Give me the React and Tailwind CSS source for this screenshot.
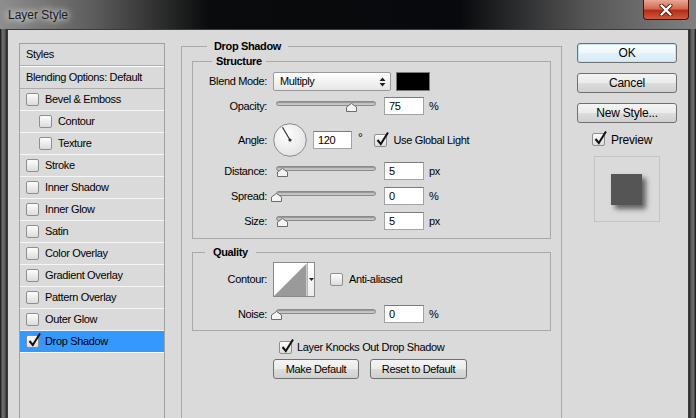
import React from "react";

const styleRows = [
  { label: "Bevel & Emboss", indent: false, on: false },
  { label: "Contour", indent: true, on: false },
  { label: "Texture", indent: true, on: false },
  { label: "Stroke", indent: false, on: false },
  { label: "Inner Shadow", indent: false, on: false },
  { label: "Inner Glow", indent: false, on: false },
  { label: "Satin", indent: false, on: false },
  { label: "Color Overlay", indent: false, on: false },
  { label: "Gradient Overlay", indent: false, on: false },
  { label: "Pattern Overlay", indent: false, on: false },
  { label: "Outer Glow", indent: false, on: false },
  { label: "Drop Shadow", indent: false, on: true, selected: true },
];

const Check = ({ on }) => (
  <span className="relative flex h-[13px] w-[13px] shrink-0 rounded-[2px] border border-[#8e8e8e] bg-[linear-gradient(#fdfdfd,#dcdcdc)]">
    {on && (
      <svg className="absolute left-[1px] top-[-4px]" width="14" height="15" viewBox="0 0 14 15">
        <path d="M1.5 9 L4.8 13 L12 1.5" fill="none" stroke="#111" strokeWidth="2" />
      </svg>
    )}
  </span>
);

const Field = ({ v, w = "w-[40px]" }) => (
  <div className={`${w} flex h-[18px] shrink-0 items-center border border-[#a3a3a3] border-t-[#7c7c7c] bg-white pl-[4px]`}>
    {v}
  </div>
);

const Slider = ({ pos }) => (
  <div className="relative ml-[3px] h-[18px] w-[100px] shrink-0">
    <div className="mt-[4px] h-[5px] rounded-full border border-[#8a8a8a] bg-[#c6c6c6] shadow-[inset_0_1px_1px_rgba(0,0,0,0.25)]" />
    <svg className="absolute top-[6px]" style={{ left: pos - 5 }} width="11" height="9" viewBox="0 0 11 9">
      <path d="M0.5 8.5 V4 L5.5 0.5 L10.5 4 V8.5 Z" fill="#f4f4f4" stroke="#6c6c6c" />
    </svg>
  </div>
);

const Label = ({ children }) => <div className="w-[74px] shrink-0 text-right">{children}</div>;

const Btn = ({ children, cls = "" }) => (
  <div className={`flex h-[20px] items-center justify-center rounded-[3px] border border-[#707070] bg-[linear-gradient(#f4f4f4_0%,#ebebeb_50%,#dddddd_51%,#cfcfcf_100%)] ${cls}`}>
    {children}
  </div>
);

export default function App() {
  return (
    <div className="flex h-[418px] w-[696px] flex-col overflow-hidden bg-[#2a2a2a] font-['Liberation_Sans',Arial,sans-serif] text-[11px] tracking-[-0.35px] text-black">
      {/* title bar */}
      <div className="flex h-[29px] shrink-0 items-start bg-[linear-gradient(to_right,#8e8e8e_0%,#5a5a5a_14%,#0a0b0c_30%,#07090c_66%,#555_84%,#808080_100%)]">
        <div className="pl-[8px] pt-[6px] text-[12px] tracking-normal text-[#1a1a1a] [text-shadow:0_0_6px_#fff,0_0_10px_rgba(255,255,255,0.8)]">
          Layer Style
        </div>
        <div className="mr-[7px] ml-auto flex h-[20px] w-[46px] items-center justify-center rounded-b-[4px] border border-t-0 border-[#4a1208] bg-[linear-gradient(#e9a897_0%,#d36a52_45%,#b52d16_55%,#cf5a3e_100%)]">
          <svg width="14" height="12" viewBox="0 0 14 12">
            <path d="M2.5 1.5 L11.5 10.5 M11.5 1.5 L2.5 10.5" stroke="#5a1a0e" strokeWidth="4" strokeLinecap="round" />
            <path d="M2.5 1.5 L11.5 10.5 M11.5 1.5 L2.5 10.5" stroke="#fff" strokeWidth="2.4" strokeLinecap="round" />
          </svg>
        </div>
      </div>

      <div className="flex flex-1">
        <div className="w-[7px] shrink-0 bg-[linear-gradient(to_right,#111_0%,#6e6e6e_35%,#5a5a5a_70%,#222_100%)]" />
        {/* client */}
        <div className="flex w-[682px] shrink-0 overflow-hidden border-x border-t border-[#3a3a3a] bg-[#dadada]">
          {/* styles list */}
          <div className="ml-[11px] mt-[13px] h-[380px] w-[146px] shrink-0 border border-[#a0a0a0] bg-[#dadada]">
            <div className="flex h-[22px] items-center border-b border-[#acacac] pl-[6px]">Styles</div>
            <div className="flex h-[23px] items-center border-y border-t-white border-b-[#acacac] pl-[6px]">
              Blending Options: Default
            </div>
            {styleRows.map((r) => (
              <div
                key={r.label}
                className={`flex h-[22px] items-center gap-[6px] border-b border-[#f6f6f6] ${r.indent ? "pl-[19px]" : "pl-[6px]"} ${r.selected ? "bg-[#3399ff]" : ""}`}
              >
                <Check on={r.on} />
                <span>{r.label}</span>
              </div>
            ))}
          </div>

          {/* drop shadow group */}
          <fieldset className="ml-[16px] mt-[10px] h-[400px] w-[381px] shrink-0 border border-[#a9a9a9] px-[10px]">
            <legend className="ml-[15px] px-[7px] font-bold leading-[13px]">Drop Shadow</legend>

            <fieldset className="mt-[2px] w-full border border-[#a9a9a9] pb-[8px]">
              <legend className="ml-[19px] px-[4px] font-bold leading-[13px]">Structure</legend>

              <div className="mt-[4px] flex h-[19px] items-center">
                <Label>Blend Mode:</Label>
                <div className="ml-[6px] flex h-[19px] w-[118px] items-center justify-between rounded-[2px] border border-[#9a9a9a] bg-[linear-gradient(#ffffff,#e6e6e6)] pl-[6px] pr-[4px]">
                  <span>Multiply</span>
                  <svg width="7" height="10" viewBox="0 0 7 10">
                    <path d="M3.5 0.5 L6.5 4 H0.5 Z M3.5 9.5 L6.5 6 H0.5 Z" fill="#222" />
                  </svg>
                </div>
                <div className="ml-[5px] h-[19px] w-[34px] border border-[#7a7a7a] bg-black" />
              </div>

              <div className="mt-[6px] flex h-[18px] items-center">
                <Label>Opacity:</Label>
                <div className="ml-[6px] flex items-center">
                  <Slider pos={75} />
                  <div className="ml-[8px]">
                    <Field v="75" />
                  </div>
                  <span className="ml-[5px]">%</span>
                </div>
              </div>

              <div className="mt-[8px] flex h-[34px] items-center">
                <Label>Angle:</Label>
                <svg className="ml-[6px] shrink-0" width="34" height="34" viewBox="0 0 34 34">
                  <defs>
                    <radialGradient id="dial" cx="0.4" cy="0.35" r="0.7">
                      <stop offset="0" stopColor="#ffffff" />
                      <stop offset="1" stopColor="#e2e2e2" />
                    </radialGradient>
                  </defs>
                  <circle cx="17" cy="17" r="16.3" fill="url(#dial)" stroke="#8a8a8a" strokeWidth="1" />
                  <path d="M17 17 L9.5 4.2" stroke="#333" strokeWidth="1.2" />
                  <circle cx="17" cy="17" r="1.6" fill="#333" />
                </svg>
                <div className="ml-[6px]">
                  <Field v="120" w="w-[39px]" />
                </div>
                <span className="ml-[6px] mb-[5px] text-[12px] leading-none">°</span>
                <div className="ml-[12px] flex items-center gap-[6px]">
                  <Check on />
                  <span>Use Global Light</span>
                </div>
              </div>

              {[
                ["Distance:", 6, "5", "px", "mt-[5px]"],
                ["Spread:", 0, "0", "%", "mt-[7px]"],
                ["Size:", 6, "5", "px", "mt-[7px]"],
              ].map(([l, p, v, u, m]) => (
                <div key={l} className={`${m} flex h-[18px] items-center`}>
                  <Label>{l}</Label>
                  <div className="ml-[6px] flex items-center">
                    <Slider pos={p} />
                    <div className="ml-[8px]">
                      <Field v={v} />
                    </div>
                    <span className="ml-[5px]">{u}</span>
                  </div>
                </div>
              ))}
            </fieldset>

            <fieldset className="mt-[7px] w-full border border-[#a9a9a9] pb-[7px]">
              <legend className="ml-[12px] px-[8px] font-bold leading-[13px]">Quality</legend>

              <div className="mt-[3px] flex h-[35px] items-center">
                <Label>Contour:</Label>
                <div className="ml-[6px] flex h-[35px] w-[42px] shrink-0 border border-[#8a8a8a] bg-white">
                  <svg width="33" height="33" viewBox="0 0 33 33">
                    <path d="M0.5 32.5 L32.5 0.5 V33 H0 Z" fill="#9a9a9a" />
                  </svg>
                  <div className="flex flex-1 items-center justify-center border-l border-[#b5b5b5] bg-[linear-gradient(#fff,#ececec)]">
                    <svg width="5" height="3" viewBox="0 0 5 3">
                      <path d="M0 0 H5 L2.5 3 Z" fill="#222" />
                    </svg>
                  </div>
                </div>
                <div className="ml-[15px] flex items-center gap-[6px]">
                  <Check />
                  <span>Anti-aliased</span>
                </div>
              </div>

              <div className="mt-[8px] flex h-[18px] items-center">
                <Label>Noise:</Label>
                <div className="ml-[6px] flex items-center">
                  <Slider pos={0} />
                  <div className="ml-[8px]">
                    <Field v="0" />
                  </div>
                  <span className="ml-[5px]">%</span>
                </div>
              </div>
            </fieldset>

            <div className="ml-[87px] mt-[9px] flex h-[14px] items-center gap-[5px]">
              <Check on />
              <span>Layer Knocks Out Drop Shadow</span>
            </div>

            <div className="ml-[81px] mt-[5px] flex gap-[11px]">
              <Btn cls="h-[19px] w-[86px]">Make Default</Btn>
              <Btn cls="h-[19px] w-[97px]">Reset to Default</Btn>
            </div>
          </fieldset>

          {/* right column */}
          <div className="ml-[15px] mt-[13px] flex w-[100px] shrink-0 flex-col text-[12px] tracking-[-0.2px]">
            <Btn cls="border-[#3c7fb1] bg-[linear-gradient(#fbfdfe_0%,#eef7fc_50%,#e2f1fa_51%,#d6ebf7_100%)] shadow-[inset_0_0_0_1px_#c4e5f6]">
              OK
            </Btn>
            <Btn cls="mt-[10px]">Cancel</Btn>
            <Btn cls="mt-[10px]">New Style...</Btn>
            <div className="ml-[15px] mt-[10px] flex h-[13px] items-center gap-[6px]">
              <Check on />
              <span>Preview</span>
            </div>
            <div className="ml-[17px] mt-[10px] h-[66px] w-[66px] border border-[#c4c4c4] pl-[16px] pt-[17px]">
              <div className="h-[31px] w-[31px] bg-[#555555] shadow-[4px_4px_5px_rgba(0,0,0,0.55)]" />
            </div>
          </div>
        </div>
        <div className="w-[7px] shrink-0 bg-[linear-gradient(to_right,#222_0%,#5a5a5a_30%,#6e6e6e_65%,#111_100%)]" />
      </div>
    </div>
  );
}
